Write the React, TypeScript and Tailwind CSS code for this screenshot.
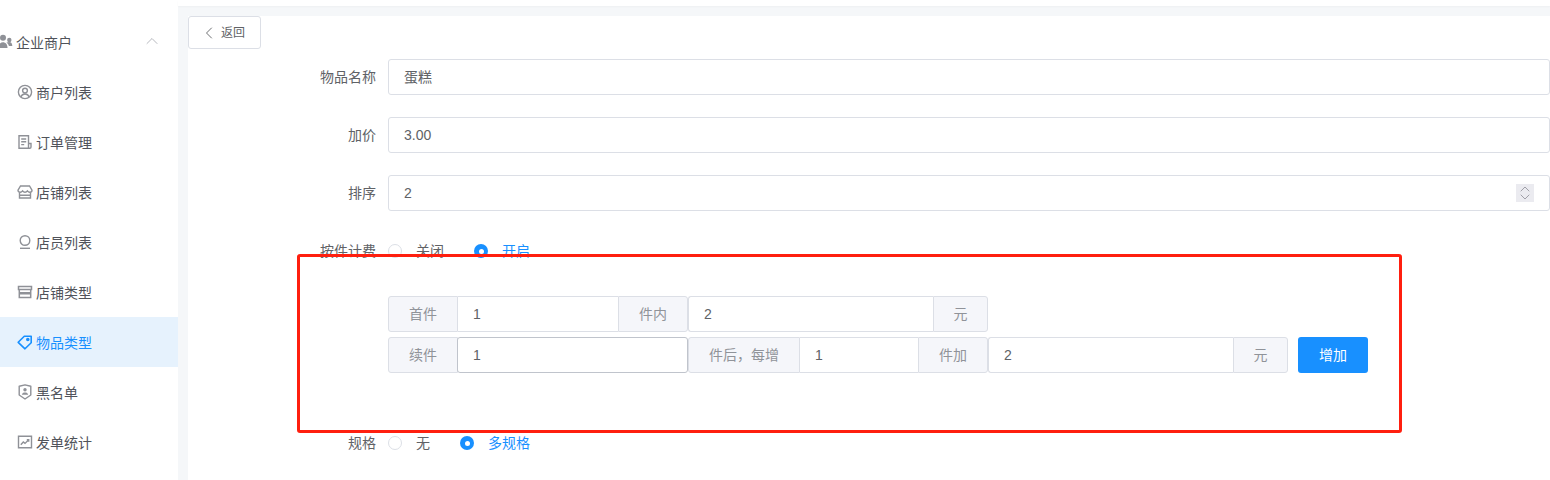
import { ChevronLeft, ChevronUp, ChevronDown } from 'lucide-react';
import type { ReactNode } from 'react';

const FONT = "font-['Liberation_Sans','Noto_Sans_CJK_SC',sans-serif]";

function UserCircleIcon() {
  return (
    <svg width="16" height="16" viewBox="0 0 16 16" fill="none" stroke="currentColor" strokeWidth="1.4">
      <circle cx="8" cy="8" r="6.6" />
      <circle cx="8" cy="6.6" r="2.4" />
      <path d="M3.8 13c.8-2 2.3-3 4.2-3s3.400 1 4.200 3" />
    </svg>
  );
}

function OrderIcon() {
  return (
    <svg width="16" height="16" viewBox="0 0 16 16" fill="none" stroke="currentColor" strokeWidth="1.4">
      <path d="M2 1.800h9.500v12.400H2z" />
      <path d="M4.200 5h5M4.200 7.800h5M4.200 10.600h3" />
      <path d="M11.500 9.500h2.500v3.500a1.200 1.200 0 0 1-1.200 1.200h-1.300" />
    </svg>
  );
}

function StoreIcon() {
  return (
    <svg width="16" height="16" viewBox="0 0 16 16" fill="none" stroke="currentColor" strokeWidth="1.4">
      <path d="M3.500 2h9L15 6.200c0 1.300-1 2-2.300 2-.9 0-1.800-.6-2.300-1.300-.5.700-1.400 1.300-2.400 1.300s-1.900-.6-2.400-1.300c-.5.700-1.400 1.300-2.300 1.300C2 8.200 1 7.500 1 6.200z" />
      <path d="M2.500 8.200V14h11V8.200M2.500 11.300h11" />
    </svg>
  );
}

function StaffIcon() {
  return (
    <svg width="16" height="16" viewBox="0 0 16 16" fill="none" stroke="currentColor" strokeWidth="1.4">
      <circle cx="8" cy="6.500" r="4.800" />
      <path d="M3 14.300h10" />
    </svg>
  );
}

function ShopTypeIcon() {
  return (
    <svg width="16" height="16" viewBox="0 0 16 16" fill="none" stroke="currentColor" strokeWidth="1.5">
      <path d="M1.500 2.500h13v3h-13zM2.300 5.500v8h11.400v-8" />
      <path d="M2.300 8h11.400v2.500H2.300z" fill="currentColor" stroke="none" />
    </svg>
  );
}

function TagIcon() {
  return (
    <svg width="16" height="16" viewBox="0 0 16 16" fill="none" stroke="currentColor" strokeWidth="1.6">
      <path d="M1.200 8.300 7.300 2.200h6.900v6.600l-6.200 6z" strokeLinejoin="round" />
      <circle cx="10.800" cy="5.500" r="1" fill="currentColor" />
    </svg>
  );
}

function ShieldIcon() {
  return (
    <svg width="16" height="16" viewBox="0 0 16 16" fill="none" stroke="currentColor" strokeWidth="1.4">
      <path d="M2.200 2.300 8 .9l5.800 1.400V11L8 15l-5.800-4z" strokeLinejoin="round" />
      <circle cx="8" cy="5.800" r="1.700" fill="currentColor" stroke="none" />
      <path d="M4.800 10.800c.4-1.700 1.600-2.300 3.200-2.300s2.800.6 3.200 2.300z" fill="currentColor" stroke="none" />
    </svg>
  );
}

function ChartIcon() {
  return (
    <svg width="16" height="16" viewBox="0 0 16 16" fill="none" stroke="currentColor" strokeWidth="1.4">
      <path d="M1.500 2.300h13v11.400h-13z" />
      <path d="M3.800 10.800 6.300 8l1.700 1.400 3.500-3.400M9.800 5.800h1.900v1.900" />
    </svg>
  );
}

function PeopleIcon() {
  return (
    <svg width="16" height="16" viewBox="0 0 16 16" fill="currentColor">
      <circle cx="4" cy="3.800" r="3" />
      <path d="M-.500 14c0-3.600 2-5.700 4.500-5.700s4.500 2.100 4.500 5.700z" />
      <circle cx="10.300" cy="6" r="2.200" />
      <path d="M7.400 8.800c.8-.5 1.800-.7 2.900-.7 1.800 0 3 1.500 3 3.800H9.900c-.3-1.200-1.200-2.400-2.500-3.100z" />
    </svg>
  );
}

const menuItems = [
  { label: '商户列表', icon: <UserCircleIcon /> },
  { label: '订单管理', icon: <OrderIcon /> },
  { label: '店铺列表', icon: <StoreIcon /> },
  { label: '店员列表', icon: <StaffIcon /> },
  { label: '店铺类型', icon: <ShopTypeIcon /> },
  { label: '物品类型', icon: <TagIcon />, active: true },
  { label: '黑名单', icon: <ShieldIcon /> },
  { label: '发单统计', icon: <ChartIcon /> },
];

function Sidebar() {
  return (
    <aside className="w-[178px] shrink-0 bg-white pt-[17px] overflow-hidden">
      <div className="h-[50px] flex items-center text-[14px] text-[#50535a]">
        <span className="ml-[-1px] mr-[1px] text-[#8f9197]">
          <PeopleIcon />
        </span>
        <span className="pt-[2px]">企业商户</span>
        <ChevronUp className="ml-auto mr-[16px] mb-[3px] text-[#a8abb2]" size={20} strokeWidth={1} />
      </div>
      {menuItems.map((item) => (
        <div
          key={item.label}
          className={
            item.active
              ? 'h-[50px] flex items-center pl-[17px] gap-[3px] text-[14px] bg-[#e6f2fd] text-[#1890ff]'
              : 'h-[50px] flex items-center pl-[17px] gap-[3px] text-[14px] text-[#50535a]'
          }
        >
          <span className={item.active ? 'text-[#1890ff]' : 'text-[#8f9197]'}>{item.icon}</span>
          <span className="pt-[2px]">{item.label}</span>
        </div>
      ))}
    </aside>
  );
}

function FormRow({ label, children }: { label?: string; children: ReactNode }) {
  return (
    <div className="flex items-center h-[36px]">
      <div className="w-[200px] pr-[12px] text-right text-[14px] text-[#606266] shrink-0">{label}</div>
      <div className="flex-1 min-w-0">{children}</div>
    </div>
  );
}

function TextBox({ value, spinner }: { value: string; spinner?: boolean }) {
  return (
    <div className="h-[36px] flex items-center justify-between border border-[#dcdfe6] rounded-[3px] pl-[15px] pr-[15px] text-[14px] text-[#606266]">
      <span>{value}</span>
      {spinner && (
        <span className="w-[18px] h-[18px] bg-[#ebebf0] flex flex-col items-center justify-center text-[#a0a0a8]">
          <ChevronUp size={16} strokeWidth={1.5} className="mb-[-8px] shrink-0" />
          <ChevronDown size={16} strokeWidth={1.5} className="shrink-0" />
        </span>
      )}
    </div>
  );
}

function Radio({ label, checked }: { label: string; checked?: boolean }) {
  return (
    <div className="flex items-center gap-[14px] mr-[30px]">
      {checked ? (
        <span className="w-[14px] h-[14px] rounded-full bg-[#1890ff] flex items-center justify-center">
          <span className="w-[5px] h-[5px] rounded-full bg-white" />
        </span>
      ) : (
        <span className="w-[14px] h-[14px] rounded-full border border-[#dcdfe6] bg-white" />
      )}
      <span className={checked ? 'text-[14px] text-[#1890ff]' : 'text-[14px] text-[#606266]'}>{label}</span>
    </div>
  );
}

function Addon({ width, text, left, right }: { width: string; text: string; left?: boolean; right?: boolean }) {
  return (
    <div
      className={`${width} h-[36px] shrink-0 flex items-center justify-center bg-[#f5f6fa] border border-[#dcdfe6] text-[14px] text-[#909399] ${
        left ? 'rounded-l-[3px]' : ''
      } ${right ? 'rounded-r-[3px]' : ''}`}
    >
      {text}
    </div>
  );
}

// leading: the field starts a new group, so it has its own left edge
function Field({ width, value, leading, full }: { width: string; value: string; leading?: boolean; full?: boolean }) {
  return (
    <div
      className={`${width} h-[36px] shrink-0 flex items-center text-[14px] text-[#606266] ${
        full
          ? 'ml-[-1px] pl-[15px] border border-[#c0c4cc] rounded-[3px] bg-white'
          : leading
            ? 'pl-[15px] border-y border-l border-[#dcdfe6] rounded-l-[3px]'
            : 'pl-[15px] border-y border-[#dcdfe6]'
      }`}
    >
      {value}
    </div>
  );
}

function PriceRules() {
  return (
    <div className="ml-[200px] mt-[27px] flex flex-col gap-[5px]">
      <div className="flex">
        <Addon width="w-[70px]" text="首件" left />
        <Field width="w-[160px]" value="1" />
        <Addon width="w-[70px]" text="件内" right />
        <Field width="w-[245px]" value="2" leading />
        <Addon width="w-[55px]" text="元" right />
      </div>
      <div className="flex">
        <Addon width="w-[70px]" text="续件" left />
        <Field width="w-[231px]" value="1" full />
        <Addon width="w-[112px]" text="件后，每增" left />
        <Field width="w-[118px]" value="1" />
        <Addon width="w-[70px]" text="件加" right />
        <Field width="w-[245px]" value="2" leading />
        <Addon width="w-[55px]" text="元" right />
        <button className="ml-[10px] w-[70px] h-[36px] rounded-[3px] bg-[#1890ff] text-[14px] text-white">增加</button>
      </div>
    </div>
  );
}

export default function App() {
  return (
    <div className={`${FONT} relative w-[1550px] h-[480px] flex overflow-hidden bg-white`}>
      <Sidebar />
      <main className="flex-1 min-w-0 bg-[#f5f7f9] flex flex-col">
        <div className="h-[6px] bg-white shadow-[0_1px_2px_rgba(0,0,0,0.03)] shrink-0" />
        <div className="flex-1 mt-[10px] ml-[10px] bg-white">
          <button className="w-[73px] h-[33px] border border-[#dcdfe6] rounded-[3px] bg-white flex items-center pl-[10px] gap-[2px] text-[12px] text-[#606266]">
            <ChevronLeft size={20} strokeWidth={1.1} className="shrink-0" />
            返回
          </button>
          <div className="mt-[10px] flex flex-col gap-[22px]">
            <FormRow label="物品名称"><TextBox value="蛋糕" /></FormRow>
            <FormRow label="加价"><TextBox value="3.00" /></FormRow>
            <FormRow label="排序"><TextBox value="2" spinner /></FormRow>
            <FormRow label="按件计费">
              <div className="flex">
                <Radio label="关闭" />
                <Radio label="开启" checked />
              </div>
            </FormRow>
          </div>
          <PriceRules />
          <div className="mt-[52px]">
            <FormRow label="规格">
              <div className="flex">
                <Radio label="无" />
                <Radio label="多规格" checked />
              </div>
            </FormRow>
          </div>
        </div>
      </main>
      {/* annotation box drawn over the form */}
      <div className="absolute left-[297px] top-[254px] w-[1105px] h-[179px] border-[3px] border-[#ff1f0f] rounded-[3px] pointer-events-none" />
    </div>
  );
}
